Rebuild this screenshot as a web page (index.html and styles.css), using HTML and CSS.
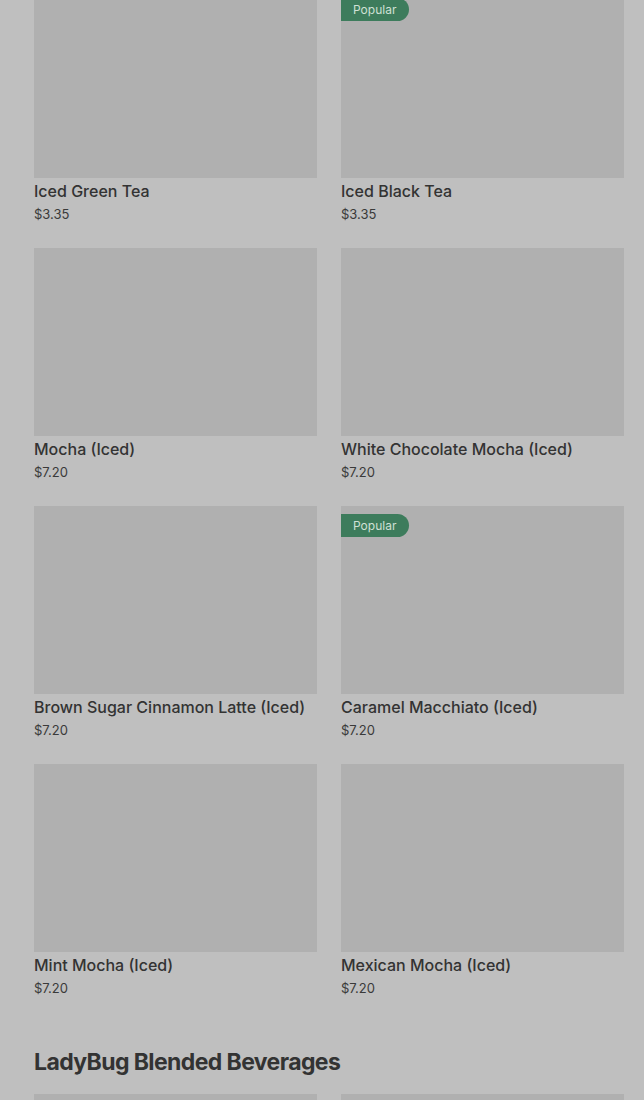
FILE: index.html
```html
<!DOCTYPE html>
<html lang="en">
<head>
    <meta charset="UTF-8">
    <meta name="viewport" content="width=device-width, initial-scale=1.0">
    <title>Menu</title>
    <link rel="stylesheet" href="styles.css">
</head>
<body>
    <div class="menu">
        <div class="grid grid-top">
            <div class="item">
                <div class="thumb"></div>
                <div class="name">Iced Green Tea</div>
                <div class="price">$3.35</div>
            </div>
            <div class="item">
                <div class="thumb"><span class="badge">Popular</span></div>
                <div class="name">Iced Black Tea</div>
                <div class="price">$3.35</div>
            </div>
            <div class="item">
                <div class="thumb"></div>
                <div class="name">Mocha (Iced)</div>
                <div class="price">$7.20</div>
            </div>
            <div class="item">
                <div class="thumb"></div>
                <div class="name">White Chocolate Mocha (Iced)</div>
                <div class="price">$7.20</div>
            </div>
            <div class="item">
                <div class="thumb"></div>
                <div class="name">Brown Sugar Cinnamon Latte (Iced)</div>
                <div class="price">$7.20</div>
            </div>
            <div class="item">
                <div class="thumb"><span class="badge">Popular</span></div>
                <div class="name">Caramel Macchiato (Iced)</div>
                <div class="price">$7.20</div>
            </div>
            <div class="item">
                <div class="thumb"></div>
                <div class="name">Mint Mocha (Iced)</div>
                <div class="price">$7.20</div>
            </div>
            <div class="item">
                <div class="thumb"></div>
                <div class="name">Mexican Mocha (Iced)</div>
                <div class="price">$7.20</div>
            </div>
        </div>

        <h2 class="section-title">LadyBug Blended Beverages</h2>
        <div class="grid">
            <div class="item">
                <div class="thumb"></div>
            </div>
            <div class="item">
                <div class="thumb"></div>
            </div>
        </div>
    </div>
</body>
</html>
```
FILE: styles.css
```css
body {
    margin: 0;
    background-color: #bfbfbf;
    color: #333;
    font-family: Inter, 'Liberation Sans', sans-serif;
    overflow: hidden;
}
.menu {
    padding: 0 20px 0 34px;
}
.grid {
    display: grid;
    grid-template-columns: 1fr 1fr;
    column-gap: 24px;
    row-gap: 24px;
}
.grid-top {
    margin-top: -10px;
}
.thumb {
    position: relative;
    height: 188px;
    background-color: #b0b0b0;
}
.badge {
    position: absolute;
    top: 8px;
    left: 0;
    height: 23px;
    line-height: 23px;
    padding: 0 13px 0 12px;
    background-color: #3d7c5c;
    color: #cfe0d5;
    font-size: 12px;
    border-radius: 0 12px 12px 0;
}
.name {
    margin-top: 1px;
    font-size: 16px;
    font-weight: 500;
    line-height: 24px;
    color: #333;
}
.price {
    padding-top: 1px;
    font-size: 13px;
    line-height: 20px;
    color: #3a3a3a;
}
.section-title {
    margin: 48px 0 16px;
    font-size: 23px;
    font-weight: 700;
    line-height: 32px;
    letter-spacing: -0.6px;
    color: #333;
}
```
